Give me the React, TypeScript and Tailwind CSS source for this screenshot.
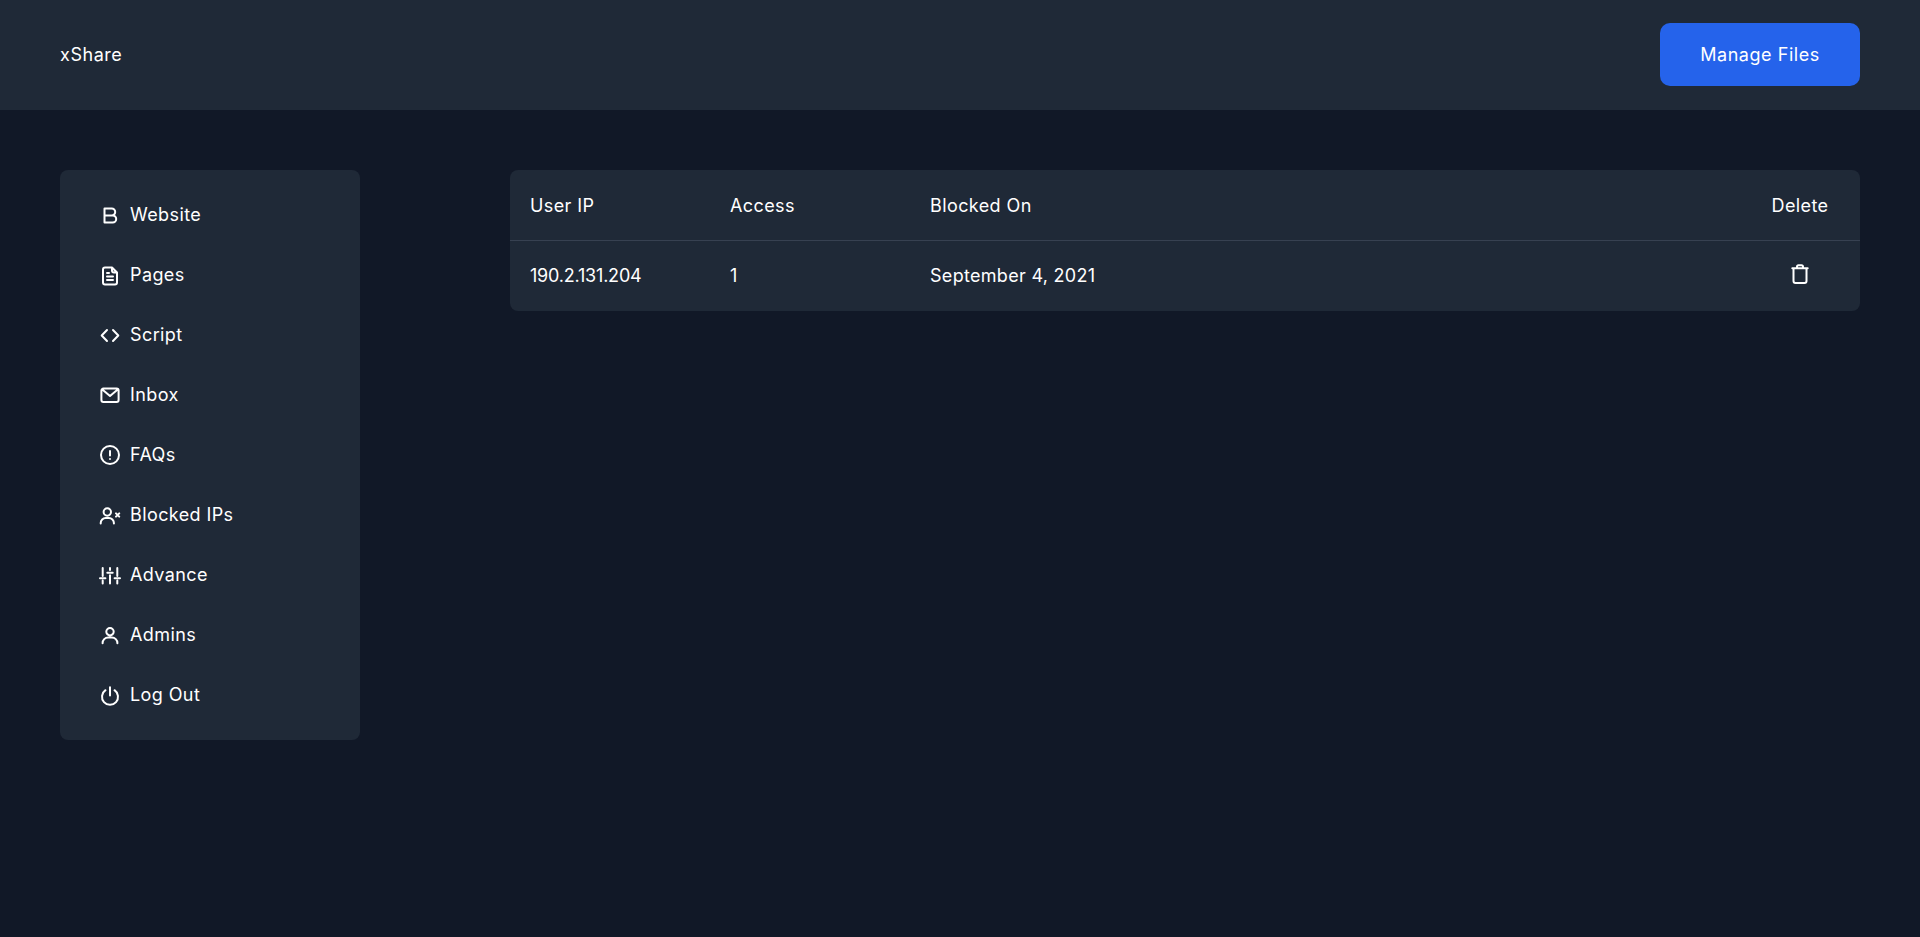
import React from 'react';

const iconClass = 'w-6 h-6 shrink-0 fill-none stroke-current stroke-[2] [stroke-linecap:round] [stroke-linejoin:round]';

function Glyph({ d, className }: { d: string; className?: string }) {
  return (
    <svg viewBox="0 0 24 24" className={className ?? iconClass}>
      <path d={d} />
    </svg>
  );
}

const navItems = [
  { label: 'Website', d: 'M6.5 5.5V19.5M6.5 5.5h7.2a3.5 3.5 0 0 1 0 7H6.5M6.5 12.5h8.2a3.5 3.5 0 0 1 0 7H6.5' },
  { label: 'Pages', d: 'M14 4.5H7a2 2 0 0 0-2 2v13a2 2 0 0 0 2 2h10a2 2 0 0 0 2-2V9.5zM14 4.5v3a2 2 0 0 0 2 2h3M9 10h2M9 13.5h6M9 17h6' },
  { label: 'Script', d: 'M9 7l-5.3 5.5L9 18M15 7l5.3 5.5L15 18' },
  { label: 'Inbox', d: 'M5.4 5.5h13.2a2 2 0 0 1 2 2V17a2 2 0 0 1-2 2H5.4a2 2 0 0 1-2-2V7.5a2 2 0 0 1 2-2zM4 6.2l8 6.8 8-6.8' },
  { label: 'FAQs', d: 'M12 3a9 9 0 1 0 0 18a9 9 0 1 0 0-18zM12 8v4.5M12 15.9v.1' },
  { label: 'Blocked IPs', d: 'M9.3 5.3a3.7 3.7 0 1 0 0 7.4a3.7 3.7 0 1 0 0-7.4zM2.7 20.5v-.5a5 5 0 0 1 5-5h3.2a5 5 0 0 1 5 5v.5M18 10.4l3.2 3.2M21.2 10.4l-3.2 3.2' },
  { label: 'Advance', d: 'M4.7 5v8M4.7 17.5v3M2 15.3h5.4M12 5v2M12 12.2v8.3M9.3 9.7h5.4M19.3 5v8M19.3 17.5v3M16.6 15.3H22' },
  { label: 'Admins', d: 'M12 5a3.7 3.7 0 1 0 0 7.4a3.7 3.7 0 1 0 0-7.4zM4.6 20.3V20a5.5 5.5 0 0 1 5.5-5.5h3.8a5.5 5.5 0 0 1 5.5 5.5v.3' },
  { label: 'Log Out', d: 'M12 4.3v8.2M7.5 7.2a8 8 0 1 0 9 0' },
];

export default function App() {
  return (
    <div className="min-h-[937px] bg-[#111827] text-[18px] font-[430] text-white font-['Inter',sans-serif] tracking-[0.4px]">
      <header className="pt-[23px] pb-[24px] bg-[#1f2937] px-[60px] flex items-center justify-between">
        <span className="tracking-[0.55px]">xShare</span>
        <button className="w-[200px] h-[63px] rounded-[10px] bg-[#2563eb] tracking-[0.55px]">Manage Files</button>
      </header>

      <div className="flex items-start justify-between px-[60px] pt-[60px]">
        <nav className="w-[300px] py-[15px] pl-[38px] rounded-lg bg-[#1f2937]">
          {navItems.map(({ label, d }) => (
            <a key={label} href="#" className="h-[60px] flex items-center gap-2">
              <Glyph d={d} />
              <span className="pb-px">{label}</span>
            </a>
          ))}
        </nav>

        <table className="w-[1350px] table-fixed border-separate border-spacing-0 rounded-lg bg-[#1f2937]">
          <thead>
            <tr className="h-[71px] text-left">
              <th className="w-[200px] pl-5 font-[430] border-b border-[#374151]">User IP</th>
              <th className="w-[200px] pl-5 font-[430] border-b border-[#374151]">Access</th>
              <th className="pl-5 font-[430] border-b border-[#374151]">Blocked On</th>
              <th className="w-[120px] font-[430] text-center border-b border-[#374151]">Delete</th>
            </tr>
          </thead>
          <tbody>
            <tr className="h-[70px]">
              <td className="pl-5 pb-0.5 tracking-[-0.2px]">190.2.131.204</td>
              <td className="pl-5 pb-0.5">1</td>
              <td className="pl-5 pb-0.5 tracking-[0.3px]">September 4, 2021</td>
              <td className="pb-1">
                <svg viewBox="0 0 24 24" className={`${iconClass} mx-auto`}>
                  <path d="M4.3 6.3h15.4M9 6.3V4.8a1.5 1.5 0 0 1 1.5-1.5h3a1.5 1.5 0 0 1 1.5 1.5v1.5M5.5 6.3V19a2 2 0 0 0 2 2h9a2 2 0 0 0 2-2V6.3" />
                </svg>
              </td>
            </tr>
          </tbody>
        </table>
      </div>
    </div>
  );
}
